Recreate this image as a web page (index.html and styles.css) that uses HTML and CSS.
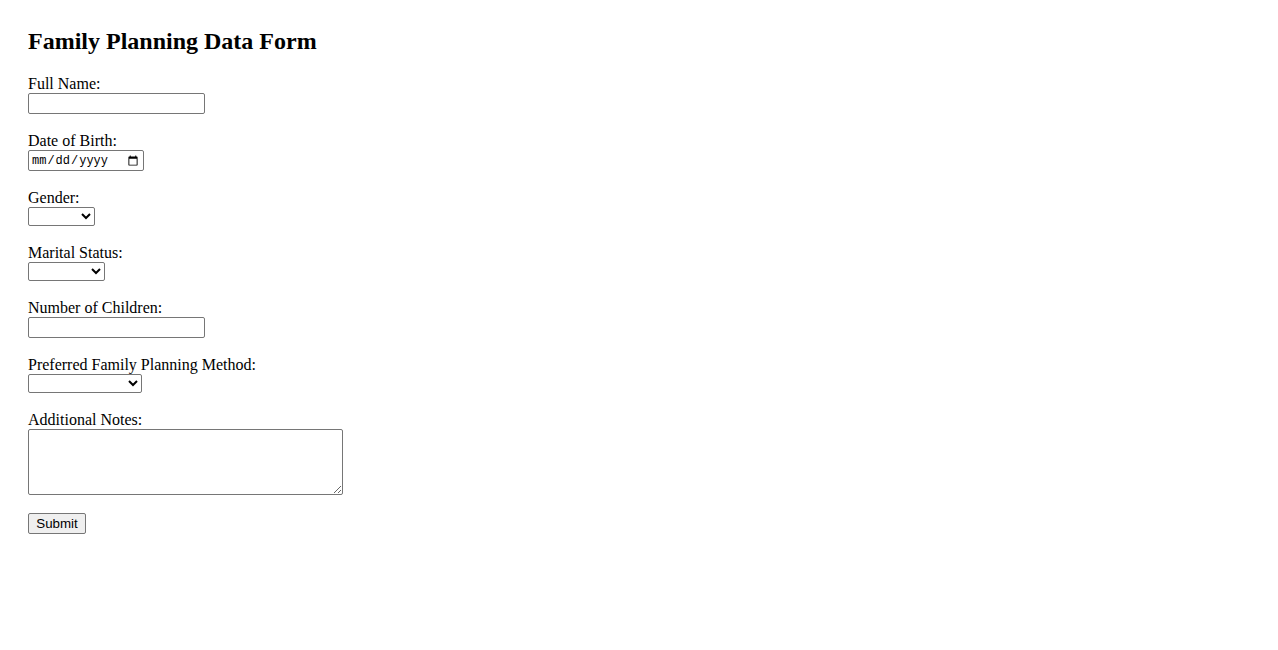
FILE: index.html
```html
<!DOCTYPE html>
<html lang="en">
<head>
    <meta charset="UTF-8">
    <meta name="viewport" content="width=device-width, initial-scale=1.0">
    <title>Family Planning Data Form</title>
    <link rel="stylesheet" href="styles.css">
</head>
<body>
    <h2>Family Planning Data Form</h2>

    <form id="fpForm">
        <div class="form-group">
            <label for="fullName">Full Name:</label>
            <input type="text" id="fullName" name="fullName" class="text-input">
        </div>

        <div class="form-group">
            <label for="dob">Date of Birth:</label>
            <input type="date" id="dob" name="dob" class="date-input">
        </div>

        <div class="form-group">
            <label for="gender">Gender:</label>
            <select id="gender" name="gender" class="sel-gender">
                <option value=""></option>
                <option value="male">Male</option>
                <option value="female">Female</option>
            </select>
        </div>

        <div class="form-group">
            <label for="marital">Marital Status:</label>
            <select id="marital" name="marital" class="sel-marital">
                <option value=""></option>
                <option value="single">Single</option>
                <option value="married">Married</option>
                <option value="divorced">Divorced</option>
            </select>
        </div>

        <div class="form-group">
            <label for="children">Number of Children:</label>
            <input type="number" id="children" name="children" class="text-input">
        </div>

        <div class="form-group">
            <label for="method">Preferred Family Planning Method:</label>
            <select id="method" name="method" class="sel-method">
                <option value=""></option>
                <option value="pill">Pill</option>
                <option value="condom">Condom</option>
                <option value="iud">IUD</option>
                <option value="natural">Natural Planning</option>
            </select>
        </div>

        <div class="form-group">
            <label for="notes">Additional Notes:</label>
            <textarea id="notes" name="notes" class="notes"></textarea>
        </div>

        <button type="submit">Submit</button>
    </form>
</body>
</html>
```

FILE: styles.css
```css
body {
    font-family: "Liberation Serif", "Times New Roman", serif;
    font-size: 16px;
    margin: 0;
    padding: 28px;
    color: #000;
    background: #fff;
}
h2 {
    font-size: 24px;
    margin: 0 0 20px 0;
    line-height: 27px;
}
.form-group {
    margin-bottom: 18px;
}
label {
    display: block;
    line-height: 18px;
}
input, select, textarea, button {
    font-family: "Liberation Sans", Arial, sans-serif;
    font-size: 13.33px;
    box-sizing: border-box;
    margin: 0;
}
input {
    display: block;
    border: 1px solid #767676;
    border-radius: 2px;
    padding: 1px 2px;
    height: 21px;
}
.text-input {
    width: 177px;
}
.date-input {
    width: 116px;
    font-family: "Liberation Mono", "Courier New", monospace;
    font-size: 12px;
}
select {
    display: block;
    height: 19px;
    border: 1px solid #767676;
    border-radius: 2px;
    background: #fff;
}
.sel-gender {
    width: 67px;
}
.sel-marital {
    width: 77px;
}
.sel-method {
    width: 114px;
}
.notes {
    display: block;
    width: 315px;
    height: 66px;
    border: 1px solid #767676;
    border-radius: 2px;
}
button {
    display: block;
    width: 58px;
    height: 21px;
    padding: 1px 6px;
    border: 1px solid #767676;
    border-radius: 2px;
    background: #efefef;
}
```
